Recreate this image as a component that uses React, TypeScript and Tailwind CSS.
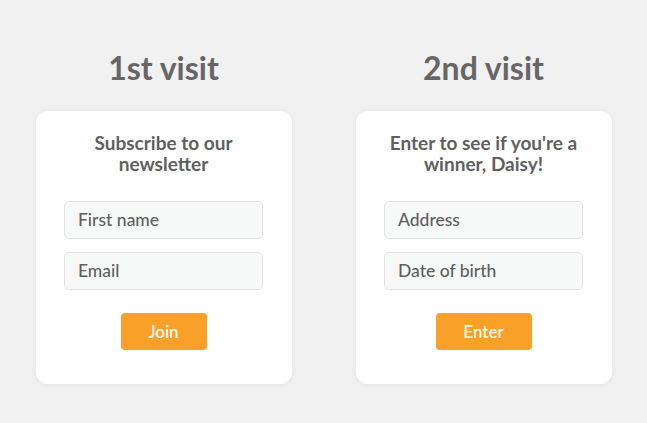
import React from "react";

const font = { fontFamily: "Lato, 'Open Sans', sans-serif" };

function Card({ title, fields, button, btnW }: { title: string[]; fields: string[]; button: string; btnW: string }) {
  return (
    <div className="w-[256px] h-[273px] bg-white rounded-[12px] shadow-[0_1px_6px_rgba(0,0,0,0.06)] flex flex-col items-center pt-[21px]">
      <div className="text-[19px] leading-[21px] font-bold text-[#5f5f5f] text-center">
        {title.map((t) => (
          <div key={t}>{t}</div>
        ))}
      </div>
      <div className="mt-[27px] flex flex-col gap-[13px]">
        {fields.map((f) => (
          <div
            key={f}
            className="w-[199px] h-[38px] rounded-[5px] bg-[#f7f8f8] border border-[#e2e4e4] flex items-center pl-[13px] text-[17.5px] font-medium text-[#5f5f5f]"
          >
            {f}
          </div>
        ))}
      </div>
      <div className={`mt-[23px] ${btnW} h-[37px] rounded-[4px] bg-[#f8a028] text-white text-[17px] font-medium flex items-center justify-center`}>
        {button}
      </div>
    </div>
  );
}

export default function App() {
  return (
    <div style={font} className="w-[647px] h-[423px] bg-[#f1f1f1] flex justify-center gap-[64px] pt-[50px]">
      <div className="flex flex-col items-center">
        <div className="text-[32px] leading-[36px] font-bold text-[#666] mb-[25px]">1st visit</div>
        <Card title={["Subscribe to our", "newsletter"]} fields={["First name", "Email"]} button="Join" btnW="w-[86px]" />
      </div>
      <div className="flex flex-col items-center">
        <div className="text-[32px] leading-[36px] font-bold text-[#666] mb-[25px]">2nd visit</div>
        <Card title={["Enter to see if you're a", "winner, Daisy!"]} fields={["Address", "Date of birth"]} button="Enter" btnW="w-[96px]" />
      </div>
    </div>
  );
}
